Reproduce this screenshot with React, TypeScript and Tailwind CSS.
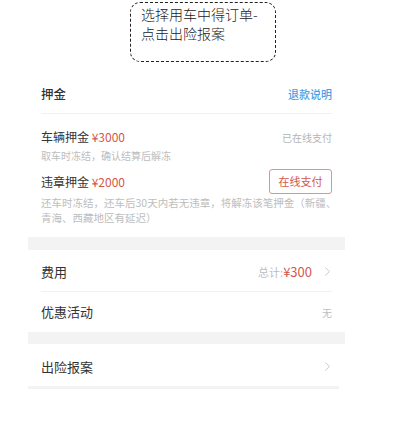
import React from "react";
import { ChevronRight } from "lucide-react";

const font = { fontFamily: '"Noto Sans CJK SC", "Noto Sans", sans-serif' };

const Chevron = () => (
  <ChevronRight size={15} strokeWidth={1.5} className="text-[#c4c4c4] -mr-[3px]" />
);

const App: React.FC = () => {
  return (
    <div className="w-[402px] h-[432px] bg-white relative" style={font}>
      <div className="pl-[130px] pt-[2px] h-[75px]">
        <div className="w-[146px] h-[60px] border border-dashed border-[#222] rounded-[10px] pl-[10px] pt-[2px] text-[14px] leading-[19px] text-[#222] font-light">
          <div>选择用车中得订单-</div>
          <div>点击出险报案</div>
        </div>
      </div>

      <div className="ml-[28px] w-[317px] bg-white">
        <div className="px-[13px]">
          <div className="h-[39px] flex items-center justify-between border-b border-[#f0f0f0]">
            <span className="text-[12.5px] text-[#333] font-medium">押金</span>
            <span className="text-[11px] text-[#4a9fe6] font-medium">退款说明</span>
          </div>

          <div className="pt-[15px] pb-[12px]">
            <div className="h-[16px] flex items-center justify-between">
              <span className="text-[12px] text-[#333]">
                车辆押金 <span className="text-[#d4574c]">¥3000</span>
              </span>
              <span className="text-[10px] text-[#b5b5b5]">已在线支付</span>
            </div>
            <div className="mt-[3px] h-[14px] flex items-center text-[10px] text-[#bdbdbd]">
              取车时冻结，确认结算后解冻
            </div>

            <div className="mt-[7px] h-[25px] flex items-center justify-between">
              <span className="text-[12px] text-[#333]">
                违章押金 <span className="text-[#d4574c]">¥2000</span>
              </span>
              <span className="h-[25px] w-[63px] flex items-center justify-center border border-[#e0948c] rounded-[3px] text-[11px] text-[#d4574c]">
                在线支付
              </span>
            </div>
            <div className="mt-[1px] text-[10.5px] leading-[15px] text-[#bdbdbd] whitespace-nowrap">
              <div>还车时冻结，还车后30天内若无违章，将解冻该笔押金（新疆、</div>
              <div>青海、西藏地区有延迟）</div>
            </div>
          </div>
        </div>

        <div className="h-[13px] bg-[#f3f3f3]" />

        <div className="px-[13px]">
          <div className="h-[42px] pt-[2px] flex items-center justify-between border-b border-[#f0f0f0]">
            <span className="text-[13px] text-[#333]">费用</span>
            <span className="flex items-center gap-[8px]">
              <span className="text-[11px] text-[#bdbdbd]">
                总计:<span className="text-[13px] text-[#d4574c]">¥300</span>
              </span>
              <Chevron />
            </span>
          </div>
          <div className="h-[40px] flex items-center justify-between">
            <span className="text-[13px] text-[#333]">优惠活动</span>
            <span className="text-[10px] text-[#bdbdbd]">无</span>
          </div>
        </div>

        <div className="h-[12px] bg-[#f3f3f3]" />

        <div className="px-[13px]">
          <div className="h-[42px] pt-[3px] flex items-center justify-between">
            <span className="text-[13px] text-[#333]">出险报案</span>
            <Chevron />
          </div>
        </div>
        <div className="h-[3px] w-[311px] bg-[#f3f3f3]" />
      </div>
    </div>
  );
};

export default App;
